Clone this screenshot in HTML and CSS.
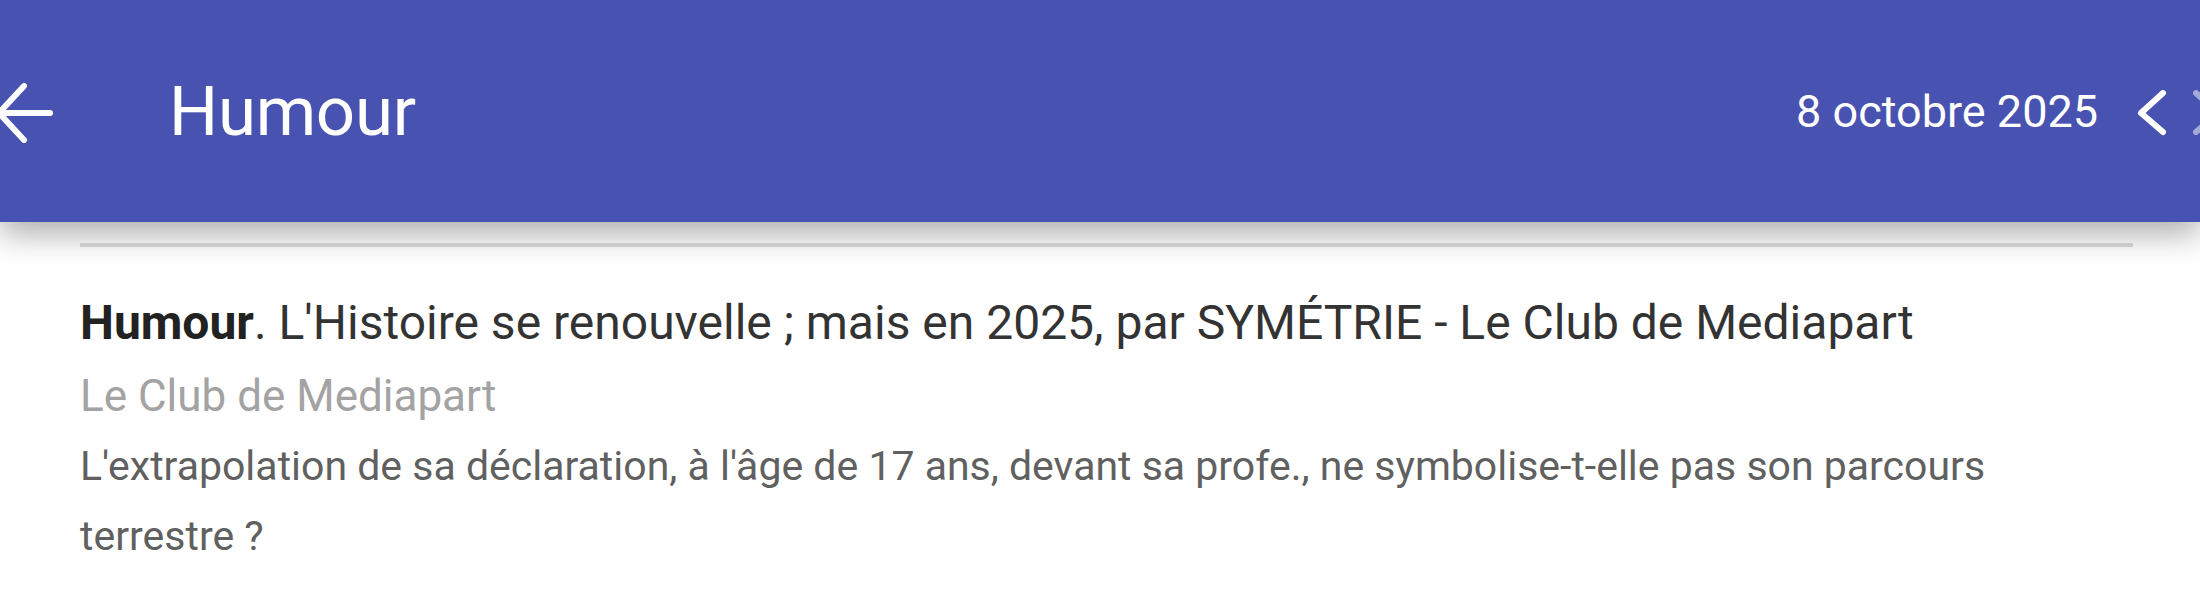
FILE: index.html
```html
<!DOCTYPE html>
<html lang="fr">
<head>
    <meta charset="utf-8">
    <title>Humour</title>
    <link rel="stylesheet" href="styles.css">
</head>
<body>
    <div class="topbar">
        <svg class="back" width="56" height="60" viewBox="0 0 56 60">
            <path d="M50 30H-1M24 3L-1 30L24 57" fill="none" stroke="#fff" stroke-width="6" stroke-linecap="round" stroke-linejoin="round"/>
        </svg>
        <h1 class="title">Humour</h1>
        <div class="datenav">
            <span class="date">8 octobre 2025</span>
            <svg class="chev" width="32" height="46" viewBox="0 0 32 46">
                <path d="M27 3L5 23L27 42" fill="none" stroke="#fff" stroke-width="6" stroke-linecap="round" stroke-linejoin="round"/>
            </svg>
            <svg class="chev next" width="32" height="46" viewBox="0 0 32 46">
                <path d="M4 3L26 23L4 42" fill="none" stroke="#fff" stroke-width="6" stroke-linecap="round" stroke-linejoin="round"/>
            </svg>
        </div>
    </div>

    <div class="content">
        <div class="sep"></div>
        <div class="item">
            <p class="headline"><b>Humour</b>. L'Histoire se renouvelle ; mais en 2025, par SYMÉTRIE - Le Club de Mediapart</p>
            <p class="source">Le Club de Mediapart</p>
            <p class="desc">L'extrapolation de sa déclaration, à l'âge de 17 ans, devant sa profe., ne symbolise-t-elle pas son parcours terrestre ?</p>
        </div>
    </div>
</body>
</html>
```

FILE: styles.css
```css
html, body{
    margin:0;
    padding:0;
    background:#fff;
    font-family:Roboto, "Noto Sans", sans-serif;
    overflow:hidden;
}
.topbar{
    position:relative;
    z-index:2;
    height:222px;
    background-color:#4852b1;
    display:flex;
    align-items:center;
    overflow:hidden;
    box-shadow:0 12px 30px rgba(0,0,0,0.32);
    color:#fff;
}
.back{
    flex:none;
    margin-top:4px;
}
.title{
    margin:0 0 0 113px;
    font-size:69px;
    font-weight:400;
    letter-spacing:-0.3px;
}
.datenav{
    margin-left:auto;
    display:flex;
    align-items:center;
    margin-right:-24px;
}
.date{
    font-size:45px;
    margin-right:38px;
}
.chev{
    flex:none;
    margin-top:4px;
}
.chev.next{
    margin-left:24px;
    opacity:0.5;
}
.content{
    padding:21px 67px 0 80px;
}
.sep{
    height:4px;
    background:#dcdcdc;
}
.item{
    padding-top:44px;
}
.headline{
    margin:0;
    font-size:48px;
    line-height:64px;
    color:#333;
}
.headline b{
    color:#222;
}
.source{
    margin:9px 0 0;
    font-size:44px;
    line-height:64px;
    color:#a3a3a3;
}
.desc{
    margin:3px 0 0;
    font-size:41px;
    line-height:70px;
    color:#606060;
}
```
